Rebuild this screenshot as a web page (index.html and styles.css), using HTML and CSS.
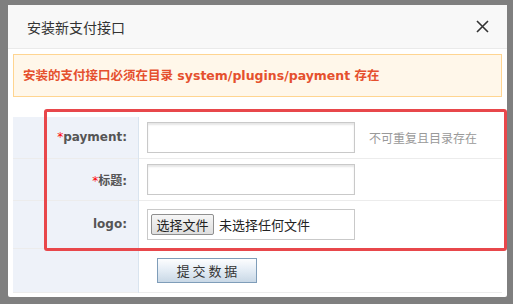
FILE: index.html
```html
<!DOCTYPE html>
<html lang="zh-CN">
<head>
  <meta charset="UTF-8" />
  <title>安装新支付接口</title>
  <link rel="stylesheet" href="styles.css">
</head>
<body>

  <div class="dialog">
    <div class="dialog-head">
      <span class="dialog-title">安装新支付接口</span>
      <span class="dialog-close">
        <svg width="13" height="13" viewBox="0 0 13 13"><path d="M1 1L12 12M12 1L1 12" stroke="#333" stroke-width="1.6" fill="none"/></svg>
      </span>
    </div>

    <div class="dialog-body">
      <div class="alert">安装的支付接口必须在目录 system/plugins/payment 存在</div>

      <table class="form-table">
        <tr class="row-a">
          <th><span class="req">*</span>payment:</th>
          <td><input type="text" class="txt"><span class="hint">不可重复且目录存在</span></td>
        </tr>
        <tr class="row-b">
          <th><span class="req">*</span>标题:</th>
          <td><input type="text" class="txt"></td>
        </tr>
        <tr class="row-c">
          <th>logo:</th>
          <td>
            <div class="file-box">
              <span class="file-btn">选择文件</span>
              <span class="file-name">未选择任何文件</span>
            </div>
          </td>
        </tr>
        <tr class="row-d">
          <th></th>
          <td><button class="submit-btn">提 交 数 据</button></td>
        </tr>
      </table>
    </div>

    <div class="highlight"></div>
  </div>

</body>
</html>
```

FILE: styles.css
```css
body {
  margin: 0;
  background: #7f7f7f;
  font-family: "DejaVu Sans", "Noto Sans CJK SC", sans-serif;
  height: 304px;
  overflow: hidden;
}

.dialog {
  position: relative;
  margin: 5px 6px 0 8px;
  height: 292px;
  background: #fff;
  border-radius: 2px;
}

.dialog-head {
  height: 43px;
  background: #f8f8f8;
  border-bottom: 1px solid #eaeaea;
  display: flex;
  align-items: center;
  justify-content: space-between;
  padding: 0 18px 0 19px;
}

.dialog-title {
  font-family: "Noto Sans CJK SC", sans-serif;
  font-size: 14px;
  color: #333;
}

.dialog-close {
  display: flex;
}

.dialog-body {
  padding: 5px 5px 0;
}

.alert {
  height: 41px;
  line-height: 41px;
  border: 1px solid #ffd591;
  background: #fff7ea;
  padding: 0 9px;
  font-family: "DejaVu Sans", "Noto Sans CJK SC", sans-serif;
  font-size: 12.5px;
  font-weight: bold;
  color: #e5502e;
}

.form-table {
  width: 100%;
  margin-top: 20px;
  border-collapse: collapse;
}

.form-table th {
  width: 114px;
  padding: 0 11px 0 0;
  background: #eef2f9;
  border-right: 1px solid #d9e4ef;
  text-align: right;
  font-size: 12px;
  font-weight: bold;
  color: #555;
}

.form-table td {
  padding: 0 0 0 8px;
  font-size: 12px;
}

.form-table tr {
  border-bottom: 1px solid #ececec;
}

.row-a { height: 41px; }
.row-b { height: 42px; }
.row-c { height: 48px; }
.row-d { height: 44px; }

.req {
  color: #f00;
  font-weight: normal;
}

.txt {
  box-sizing: border-box;
  width: 208px;
  height: 31px;
  border: 1px solid #c9c9c9;
  box-shadow: inset 0 2px 2px #e6e6e6;
  vertical-align: middle;
  margin: 0;
}

.hint {
  margin-left: 14px;
  font-family: "Noto Sans CJK SC", sans-serif;
  font-size: 12px;
  color: #999;
  vertical-align: middle;
}

.file-box {
  box-sizing: border-box;
  width: 208px;
  height: 31px;
  border: 1px solid #c9c9c9;
  display: flex;
  align-items: center;
  padding-left: 3px;
  gap: 5px;
}

.file-btn {
  box-sizing: border-box;
  height: 21px;
  width: 63px;
  border: 1px solid #8f8f8f;
  border-radius: 2px;
  background: linear-gradient(#f6f6f6, #dedede);
  font-family: "Noto Sans CJK SC", sans-serif;
  font-size: 13px;
  line-height: 19px;
  text-align: center;
  color: #222;
}

.file-name {
  font-family: "Noto Sans CJK SC", sans-serif;
  font-size: 13px;
  color: #222;
}

.submit-btn {
  box-sizing: border-box;
  width: 100px;
  height: 25px;
  margin-left: 10px;
  border: 1px solid #7f9db9;
  background: linear-gradient(#fdfdfe, #e6eef6 45%, #c9d8e6);
  font-family: "Noto Sans CJK SC", sans-serif;
  font-size: 13px;
  color: #333;
  padding: 0;
}

.highlight {
  position: absolute;
  left: 36px;
  top: 104px;
  width: 463px;
  height: 142px;
  box-sizing: border-box;
  border: 3px solid #e8474b;
  border-radius: 3px;
}
```
